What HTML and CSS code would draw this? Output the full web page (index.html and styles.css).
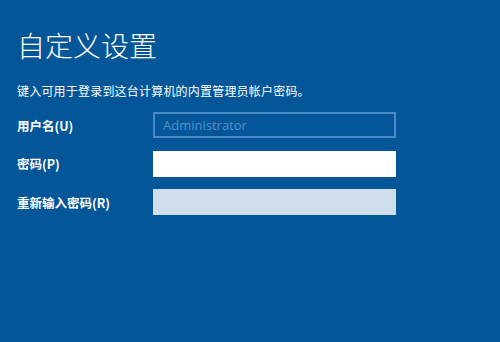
FILE: index.html
```html
<!DOCTYPE html>
<html>
<head>
  <meta charset="utf-8">
  <title>自定义设置</title>
  <link rel="stylesheet" href="styles.css">
</head>
<body>
  <div class="setup">
    <h1>自定义设置</h1>
    <p class="intro">键入可用于登录到这台计算机的内置管理员帐户密码。</p>

    <div class="form">
      <label for="user">用户名(U)</label>
      <input type="text" id="user" class="field readonly" value="Administrator" readonly>

      <label for="pass">密码(P)</label>
      <input type="password" id="pass" class="field active">

      <label for="pass2">重新输入密码(R)</label>
      <input type="password" id="pass2" class="field idle">
    </div>
  </div>
</body>
</html>
```

FILE: styles.css
```css
html, body {
  margin: 0;
  height: 100%;
}

body {
  background-color: #035799;
  color: #fff;
  font-family: "Noto Sans CJK SC", "Noto Sans", sans-serif;
}

.setup {
  padding: 26px 0 0 17px;
}

h1 {
  margin: 0;
  font-size: 28px;
  font-weight: 300;
  line-height: 38px;
}

.intro {
  margin: 19px 0 0;
  font-size: 12px;
  line-height: 16px;
  letter-spacing: 0.2px;
}

.form {
  display: grid;
  grid-template-columns: 136px 243px;
  row-gap: 12.5px;
  align-items: center;
  margin-top: 13px;
}

.form label {
  font-size: 12.5px;
  font-weight: bold;
}

.field {
  box-sizing: border-box;
  height: 26px;
  width: 243px;
  margin: 0;
  padding: 0 8px;
  border: 2px solid transparent;
  outline: none;
  font-family: "Open Sans", "Noto Sans", sans-serif;
  font-size: 13px;
}

.readonly {
  background: transparent;
  border-color: #4a8bc6;
  color: #5390c8;
}

.active {
  background: #fff;
  border-color: #fff;
}

.idle {
  background: #cfdeea;
  border-color: #cfdeea;
}
```
